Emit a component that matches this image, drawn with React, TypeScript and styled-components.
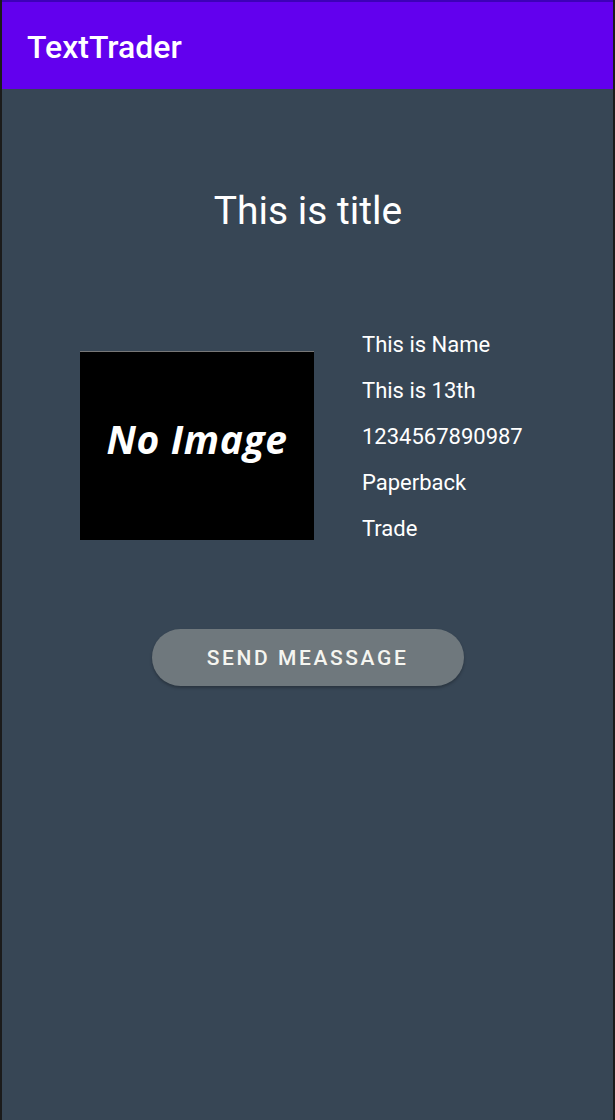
import styled, { createGlobalStyle } from 'styled-components';

const GlobalStyle = createGlobalStyle`
  html, body {
    margin: 0;
    padding: 0;
    background: #1b1b1b;
  }
  body {
    font-family: Roboto, "Noto Sans", sans-serif;
  }
`;

const details = ['This is Name', 'This is 13th', '1234567890987', 'Paperback', 'Trade'];

export default function App() {
  return (
    <>
      <GlobalStyle />
      <Screen>
        <AppBar>
          <AppTitle>TextTrader</AppTitle>
        </AppBar>
        <Content>
          <Title>This is title</Title>
          <BookRow>
            <Cover>
              <CoverText>No Image</CoverText>
            </Cover>
            <InfoList>
              {details.map((item) => (
                <InfoLine key={item}>{item}</InfoLine>
              ))}
            </InfoList>
          </BookRow>
          <SendButton>Send Meassage</SendButton>
        </Content>
      </Screen>
    </>
  );
}

const Screen = styled.div`
  width: 611px;
  height: 1120px;
  margin-left: 2px;
  display: flex;
  flex-direction: column;
  background: #374655;
  overflow: hidden;
`;

const AppBar = styled.div`
  height: 87px;
  border-top: 2px solid #3d00b8;
  background: #6200ee;
  display: flex;
  align-items: center;
  padding-left: 25px;
`;

const AppTitle = styled.div`
  color: #ffffff;
  font-size: 32px;
  font-weight: 500;
  margin-top: 2px;
`;

const Content = styled.div`
  display: flex;
  flex-direction: column;
  align-items: center;
`;

const Title = styled.div`
  margin-top: 99px;
  color: #ffffff;
  font-size: 39px;
  line-height: 46px;
  margin-left: 1px;
`;

const BookRow = styled.div`
  margin-top: 99px;
  align-self: flex-start;
  display: flex;
  align-items: flex-start;
  padding-left: 78px;
  gap: 48px;
`;

const Cover = styled.div`
  margin-top: 18px;
  width: 234px;
  height: 188px;
  background: #000000;
  border-top: 1px solid #777777;
  display: flex;
  align-items: center;
  justify-content: center;
`;

const CoverText = styled.div`
  color: #ffffff;
  font-family: "Open Sans", "DejaVu Sans", sans-serif;
  font-style: italic;
  font-weight: 700;
  font-size: 39px;
  letter-spacing: 0.6px;
  margin-top: -16px;
`;

const InfoList = styled.div`
  display: flex;
  flex-direction: column;
  gap: 22px;
`;

const InfoLine = styled.div`
  color: #ffffff;
  font-size: 22px;
  line-height: 24px;
`;

const SendButton = styled.button`
  margin-top: 88px;
  width: 312px;
  height: 57px;
  border: none;
  border-radius: 29px;
  background: #6f787d;
  color: #f5f5f0;
  font-family: Roboto, sans-serif;
  font-size: 21px;
  font-weight: 500;
  letter-spacing: 2.6px;
  text-transform: uppercase;
  box-shadow: 0 2px 3px rgba(0, 0, 0, 0.25);
`;
